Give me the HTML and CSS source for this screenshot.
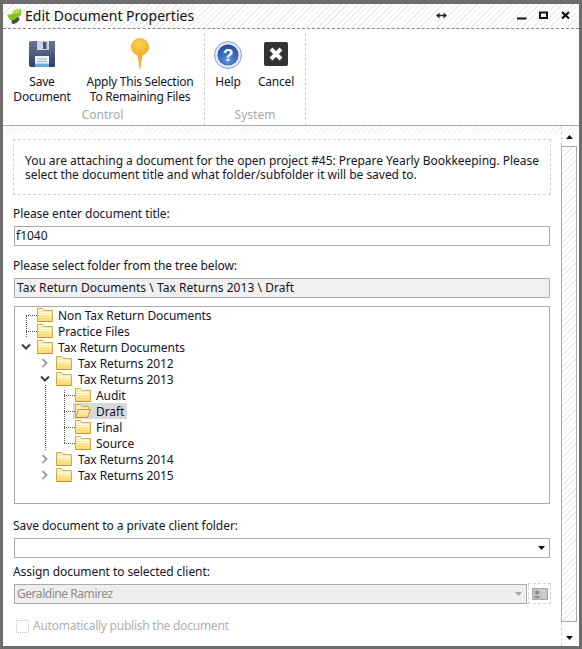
FILE: index.html
```html
<!DOCTYPE html>
<html lang="en">
<head>
<meta charset="utf-8">
<title>Edit Document Properties</title>
<link rel="stylesheet" href="styles.css">
</head>
<body>
<svg class="defs" width="0" height="0" aria-hidden="true">
  <defs>
    <linearGradient id="fg" x1="0" y1="0" x2="0" y2="1"><stop offset="0" stop-color="#fff4bf"/><stop offset="1" stop-color="#fbd76e"/></linearGradient>
    <linearGradient id="disk" x1="0" y1="0" x2="0" y2="1"><stop offset="0" stop-color="#66769a"/><stop offset="1" stop-color="#323f62"/></linearGradient>
    <radialGradient id="pin" cx=".45" cy=".35" r=".7"><stop offset="0" stop-color="#ffd452"/><stop offset="1" stop-color="#f3a91b"/></radialGradient>
    <radialGradient id="helpg" cx=".5" cy=".75" r=".75"><stop offset="0" stop-color="#5d93e4"/><stop offset="1" stop-color="#23489c"/></radialGradient>
    <symbol id="folder" viewBox="0 0 16 14">
      <path d="M.5 13.5V.5h5l1.500 2h8.500v11z" fill="url(#fg)" stroke="#d6ab4c"/>
      <path d="M2 4.500h12M2 6.500h12" stroke="#fff" opacity=".75"/>
      <path d="M.5 13.500h15" stroke="#c2963e"/>
    </symbol>
    <symbol id="folder-open" viewBox="0 0 16 14">
      <path d="M.5 13.500V.5h5l1.500 2h6.500v3" fill="#fdeeb4" stroke="#d6ab4c"/>
      <path d="M.5 13.500l3-8h12l-3 8z" fill="url(#fg)" stroke="#c2963e"/>
    </symbol>
    <symbol id="chev-down" viewBox="0 0 10 8"><path d="M1 1.500l4 4 4-4" fill="none" stroke="#404040" stroke-width="2"/></symbol>
    <symbol id="chev-right" viewBox="0 0 8 10"><path d="M1.500 1l4 4-4 4" fill="none" stroke="#a6a6a6" stroke-width="2"/></symbol>
    <symbol id="arrow-down" viewBox="0 0 7 4"><path d="M0 0h7L3.500 4z"/></symbol>
  </defs>
</svg>
<div class="window">
  <header class="titlebar">
    <svg class="app-icon" width="16" height="16" viewBox="0 0 16 16"><path d="M1 7l5-1 2-4 7-1v6l-4 3-3 3-4-1z" fill="#82c522"/><path d="M8 2l7-1-2 4-6 1z" fill="#b2e04a"/><ellipse cx="9.500" cy="12.500" rx="4.500" ry="2.500" transform="rotate(-35 9.500 12.500)" fill="#4a4a4a"/><path d="M5 11l5-4 3 1-5 4z" fill="#82c522"/></svg>
    <span class="title-text">Edit Document Properties</span>
    <svg class="resize-icon" width="11" height="7" viewBox="0 0 11 7"><path d="M2 3.500h7" stroke="#222" stroke-width="1.400"/><path d="M3.500 .5v6L0 3.500zM7.500 .5v6L11 3.500z" fill="#222"/></svg>
    <div class="win-controls">
      <svg width="10" height="10" viewBox="0 0 10 10"><path d="M0 7.500h9.500" stroke="#111" stroke-width="2"/></svg>
      <svg width="10" height="10" viewBox="0 0 10 10"><path d="M1 1.500h7v5.500H1z" fill="none" stroke="#111" stroke-width="2"/></svg>
      <svg width="10" height="10" viewBox="0 0 10 10"><path d="M1 1l7 6.500M8 1L1 7.500" stroke="#111" stroke-width="2.200"/></svg>
    </div>
  </header>
  <nav class="ribbon">
    <section class="group group-control">
      <div class="tools">
        <div class="tool tool-save">
          <svg class="tool-icon" width="26" height="26" viewBox="0 0 26 26"><path d="M0 2a2 2 0 0 1 2-2h24v25a1 1 0 0 1-1 1H2a2 2 0 0 1-2-2z" fill="url(#disk)"/><path d="M8 0h12v9H8z" fill="#cdd4de"/><path d="M14 1h3.500v7H14z" fill="#46557a"/><path d="M6 15h14v11H6z" fill="#f3f6f9"/><path d="M8 18h10M8 20.500h10" stroke="#94a9c6"/><path d="M6 22.500h14V26H6z" fill="#6ea6de"/></svg>
          <span>Save<br>Document</span>
        </div>
        <div class="tool tool-apply">
          <svg class="tool-icon" width="18" height="31" viewBox="0 0 18 31"><path d="M6.500 16h5L9.500 31h-1z" fill="#f0b22e"/><circle cx="9" cy="9" r="8.500" fill="url(#pin)" stroke="#f0b545"/></svg>
          <span>Apply This Selection<br>To Remaining Files</span>
        </div>
      </div>
      <div class="group-label">Control</div>
    </section>
    <section class="group group-system">
      <div class="tools">
        <div class="tool tool-help">
          <svg class="tool-icon" width="28" height="28" viewBox="0 0 28 28"><circle cx="14" cy="14" r="13.500" fill="#dfe8f6" stroke="#86a3d2"/><circle cx="14" cy="14" r="10.500" fill="url(#helpg)"/><text x="14" y="20" text-anchor="middle" class="help-q">?</text></svg>
          <span>Help</span>
        </div>
        <div class="tool tool-cancel">
          <svg class="tool-icon" width="24" height="24" viewBox="0 0 24 24"><rect width="24" height="24" rx="2" fill="#333"/><path d="M7 7l10 10M17 7L7 17" stroke="#fff" stroke-width="4"/></svg>
          <span>Cancel</span>
        </div>
      </div>
      <div class="group-label">System</div>
    </section>
  </nav>
  <div class="content">
    <main class="form">
      <p class="notice">You are attaching a document for the open project #45: Prepare Yearly Bookkeeping. Please select the document title and what folder/subfolder it will be saved to.</p>
      <label class="label label-title">Please enter document title:</label>
      <div class="field field-title">f1040</div>
      <label class="label label-tree">Please select folder from the tree below:</label>
      <div class="field field-path">Tax Return Documents \ Tax Returns 2013 \ Draft</div>
      <div class="tree">
        <i class="guide g-root"></i><i class="guide g-2013"></i><i class="guide g-leaf"></i>
        <div class="row l0"><i class="conn"></i><svg class="fld"><use href="#folder"/></svg><span>Non Tax Return Documents</span></div>
        <div class="row l0"><i class="conn"></i><svg class="fld"><use href="#folder"/></svg><span>Practice Files</span></div>
        <div class="row l0"><svg class="chev-d"><use href="#chev-down"/></svg><svg class="fld"><use href="#folder"/></svg><span>Tax Return Documents</span></div>
        <div class="row l1"><svg class="chev-r"><use href="#chev-right"/></svg><svg class="fld"><use href="#folder"/></svg><span>Tax Returns 2012</span></div>
        <div class="row l1"><svg class="chev-d"><use href="#chev-down"/></svg><svg class="fld"><use href="#folder"/></svg><span>Tax Returns 2013</span></div>
        <div class="row l2"><i class="conn"></i><svg class="fld"><use href="#folder"/></svg><span>Audit</span></div>
        <div class="row l2 selected"><i class="conn"></i><svg class="fld"><use href="#folder-open"/></svg><span>Draft</span></div>
        <div class="row l2"><i class="conn"></i><svg class="fld"><use href="#folder"/></svg><span>Final</span></div>
        <div class="row l2"><i class="conn"></i><svg class="fld"><use href="#folder"/></svg><span>Source</span></div>
        <div class="row l1"><svg class="chev-r"><use href="#chev-right"/></svg><svg class="fld"><use href="#folder"/></svg><span>Tax Returns 2014</span></div>
        <div class="row l1"><svg class="chev-r"><use href="#chev-right"/></svg><svg class="fld"><use href="#folder"/></svg><span>Tax Returns 2015</span></div>
      </div>
      <label class="label label-private">Save document to a private client folder:</label>
      <div class="field field-select"><svg class="arrow"><use href="#arrow-down"/></svg></div>
      <label class="label label-assign">Assign document to selected client:</label>
      <div class="assign-row">
        <div class="field field-disabled"><span class="client-name">Geraldine Ramirez</span><svg class="arrow arrow-off"><use href="#arrow-down"/></svg></div>
        <div class="card-btn"><svg width="16" height="12" viewBox="0 0 16 12"><rect width="16" height="12" fill="#c4c4c4"/><rect x=".5" y=".5" width="15" height="11" fill="none" stroke="#a9a9a9"/><circle cx="5" cy="4.500" r="2" fill="#8c8c8c"/><path d="M2 10c0-3 6-3 6 0z" fill="#8c8c8c"/><path d="M10 3h4M10 6h4M10 9h4" stroke="#e4e4e4"/></svg></div>
      </div>
      <div class="check-row"><i class="checkbox"></i><span>Automatically publish the document</span></div>
    </main>
    <aside class="scrollbar">
      <div class="sb-btn sb-up"><svg width="7" height="4" viewBox="0 0 7 4"><path d="M0 4h7L3.500 0z" fill="#111"/></svg></div>
      <div class="sb-track"></div>
      <div class="sb-btn sb-down"><svg width="7" height="4" viewBox="0 0 7 4"><path d="M0 0h7L3.500 4z" fill="#111"/></svg></div>
    </aside>
  </div>
</div>
</body>
</html>
```

FILE: styles.css
```css
* { box-sizing: border-box; }
html, body { margin: 0; padding: 0; }
body {
  width: 582px; height: 649px; overflow: hidden;
  font-family: "Noto Sans", sans-serif; font-size: 12px; color: #14142a; line-height: 16px;
}
.defs { position: absolute; }
.window {
  width: 582px; height: 649px; display: flex; flex-direction: column;
  border: 3px solid #6d6d6d; border-top-width: 4px; background: #fff;
}
.titlebar {
  height: 25px; flex: none; display: flex; align-items: center; padding: 0 8px 1px 3px;
  border-bottom: 1px dashed #8a8a8a;
  background: repeating-linear-gradient(135deg, #fff 0 3px, #ececec 3px 4px);
}
.title-text { margin-left: 3px; font-size: 14px; color: #111; }
.resize-icon { margin-left: 242px; }
.win-controls { margin-left: auto; display: flex; gap: 12px; }
.ribbon { height: 97px; flex: none; display: flex; border-bottom: 1px solid #ababab; background: #fff; }
.group { display: flex; flex-direction: column; border-right: 1px dashed #d4d4d4; margin-top: 4px; }
.group-control { width: 202px; }
.group-system { width: 101px; }
.tools { flex: 1; display: flex; }
.tool { display: flex; flex-direction: column; align-items: center; text-align: center; line-height: 15px; white-space: nowrap; letter-spacing: -.2px; }
.tool-icon { flex: none; }
.tool-save { width: 78px; padding-top: 8px; }
.tool-save span { margin-top: 7px; }
.tool-apply { width: 118px; padding-top: 5px; }
.tool-apply span { margin-top: 5px; letter-spacing: -.25px; }
.tool-help { width: 46px; padding-top: 8px; }
.tool-help span { margin-top: 5px; }
.tool-cancel { width: 50px; padding-top: 9px; }
.tool-cancel span { margin-top: 8px; }
.group-label { height: 18px; text-align: center; color: #a8a8a8; }
.group-control .group-label { padding-right: 2px; }
.help-q { font: bold 17px "Liberation Sans", sans-serif; fill: #fff; }
.content {
  flex: 1; min-height: 0; display: flex;
  background: repeating-linear-gradient(135deg, #fff 0 3px, #f1f1f1 3px 4px) top / 100% 7px no-repeat #fff;
}
.form { width: 555px; flex: none; padding: 13px 0 0 10px; }
.notice {
  margin: 0; width: 538px; height: 56px; padding: 14px 4px 0 11px; border: 1px dashed #d4d4d4;
  line-height: 14px; background: #fff; letter-spacing: -.03px;
}
.label { display: block; height: 16px; letter-spacing: -.06px; }
.label-title { margin-top: 11px; }
.label-tree { margin-top: 12px; }
.label-private { margin-top: 14px; }
.label-assign { margin-top: 6px; }
.field {
  margin: 4px 0 0 1px; width: 536px; height: 20px; border: 1px solid #ababab; padding: 0 2px;
  line-height: 18px; position: relative;
}
.field-title { padding-left: 1px; }
.field-path { background: #f0f0f0; letter-spacing: .05px; }
.arrow { position: absolute; right: 4px; top: 7px; width: 7px; height: 4px; fill: #111; }
.arrow-off { fill: #a8a8a8; }
.tree {
  position: relative; margin: 8px 0 0 1px; width: 536px; height: 198px;
  border: 1px solid #ababab; padding-top: 1px; letter-spacing: -.06px;
}
.row { position: relative; height: 16px; display: flex; align-items: center; }
.row span { white-space: nowrap; }
.fld { width: 16px; height: 14px; flex: none; margin: 0 5px 2px 0; position: relative; }
.l0 { padding-left: 22px; }
.l1 { padding-left: 41px; }
.l1 .fld { margin-right: 6px; }
.l2 { padding-left: 60px; }
.conn { position: absolute; top: 7px; height: 0; border-top: 1px dotted #555; }
.l0 .conn { left: 11px; width: 11px; }
.l2 .conn { left: 49px; width: 11px; }
.chev-d { position: absolute; width: 10px; height: 8px; top: 3px; }
.chev-r { position: absolute; width: 8px; height: 10px; top: 2px; }
.l0 .chev-d { left: 6px; }
.l1 .chev-d { left: 25px; }
.l1 .chev-r { left: 26px; }
.selected::before { content: ""; position: absolute; left: 58px; top: -1px; width: 54px; height: 16px; background: #d9d9d9; }
.selected span { position: relative; }
.guide { position: absolute; width: 0; border-left: 1px dotted #555; }
.g-root { left: 11px; top: 8px; height: 22px; }
.g-2013 { left: 30px; top: 78px; height: 65px; }
.g-leaf { left: 49px; top: 83px; height: 53px; }
.assign-row { display: flex; align-items: flex-end; margin-top: 3px; }
.field-disabled { margin-top: 0; width: 513px; background: #eeeeee; color: #8f8f8f; }
.client-name { letter-spacing: -.45px; }
.card-btn { width: 23px; height: 21px; margin-left: 1px; border: 1px dashed #d4d4d4; display: flex; align-items: center; justify-content: center; }
.check-row { display: flex; align-items: center; margin: 14px 0 0 3px; color: #b0b0b0; letter-spacing: -.24px; }
.checkbox { width: 13px; height: 13px; border: 1px dotted #c4c4c4; margin-right: 4px; }
.scrollbar { flex: 1; display: flex; flex-direction: column; padding: 0 2px 0 3px; }
.sb-btn { display: flex; align-items: center; justify-content: center; border-left: 1px dashed #d4d4d4; }
.sb-up { height: 20px; padding-top: 2px; }
.sb-down { height: 24px; padding-top: 7px; }
.sb-track { flex: 1; border: 1px solid #ababab; background: repeating-linear-gradient(135deg, #fff 0 3px, #ececec 3px 4px); }
```
